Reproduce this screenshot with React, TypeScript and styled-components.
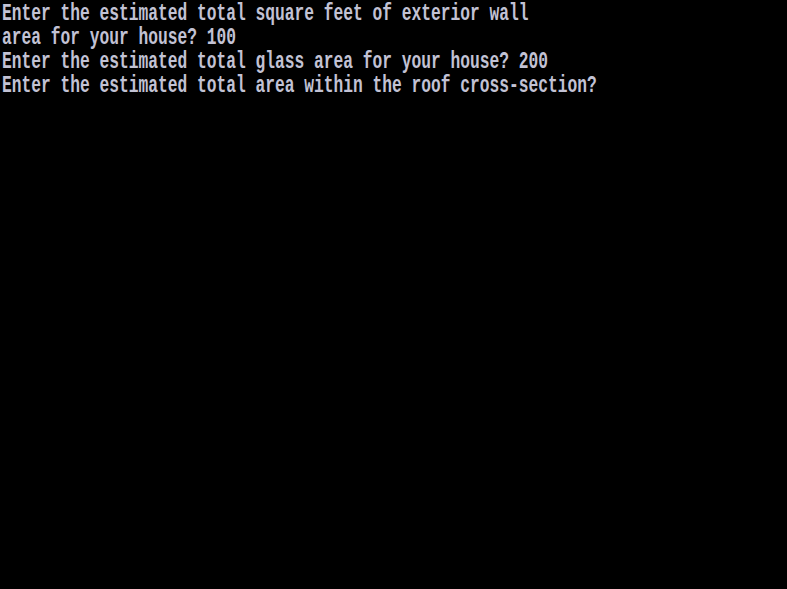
import React from "react";
import styled, { createGlobalStyle } from "styled-components";

const Global = createGlobalStyle`
  html, body { margin: 0; padding: 0; background: #000; }
  #root { min-height: 100vh; background: #000; }
`;

const Screen = styled.main`
  width: 787px;
  height: 589px;
  background: #000;
  overflow: hidden;
`;

const Output = styled.div`
  display: flex;
  flex-direction: column;
  padding: 1px 0 0 2px;
  transform: scaleY(1.42);
  transform-origin: top left;
  font-family: "Liberation Mono", "DejaVu Sans Mono", monospace;
  font-size: 16.25px;
  font-weight: bold;
  line-height: 17.05px;
  color: #c2c2d4;
  white-space: pre;
`;

const Line = styled.div``;

const lines = [
  "Enter the estimated total square feet of exterior wall",
  "area for your house? 100",
  "Enter the estimated total glass area for your house? 200",
  "Enter the estimated total area within the roof cross-section?",
];

export default function App() {
  return (
    <>
      <Global />
      <Screen>
        <Output>
          {lines.map((l, i) => (
            <Line key={i}>{l}</Line>
          ))}
        </Output>
      </Screen>
    </>
  );
}
